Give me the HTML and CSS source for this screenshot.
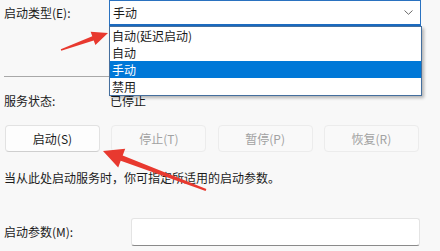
FILE: index.html
```html
<!DOCTYPE html>
<html lang="zh-CN">
<head>
<meta charset="utf-8">
<link rel="stylesheet" href="styles.css">
</head>
<body>
<div class="page">
  <div class="row type-row">
    <span class="label">启动类型(E):</span>
    <div class="combo-wrap">
      <div class="combo">
        <span class="combo-value">手动</span>
        <svg class="chev" width="9" height="5" viewBox="0 0 9 5"><path d="M0.5 0.5 L4.5 4.3 L8.5 0.5" fill="none" stroke="#6a6a6a" stroke-width="1"/></svg>
      </div>
      <ul class="list">
        <li>自动(延迟启动)</li>
        <li>自动</li>
        <li class="sel">手动</li>
        <li>禁用</li>
      </ul>
    </div>
  </div>
  <div class="sep"></div>
  <div class="row status-row">
    <span class="label">服务状态:</span>
    <span class="value">已停止</span>
  </div>
  <div class="buttons">
    <button class="btn">启动(S)</button>
    <button class="btn disabled">停止(T)</button>
    <button class="btn disabled">暂停(P)</button>
    <button class="btn disabled">恢复(R)</button>
  </div>
  <p class="desc">当从此处启动服务时，你可指定所适用的启动参数。</p>
  <div class="row param-row">
    <span class="label">启动参数(M):</span>
    <div class="input"></div>
  </div>
</div>
<svg class="arrows" width="440" height="251" viewBox="0 0 440 251">
  <polygon fill="#e8392f" points="60.8,49.3 92.3,36.3 90.6,31.8 108,33 95.4,45 93.7,40.5 61.2,50.7"/>
  <polygon fill="#e8392f" points="103,151 125.2,148.7 122.7,155.5 206.4,189.1 205.6,190.9 120.7,160.7 118.2,167.5"/>
</svg>
</body>
</html>
```
FILE: styles.css
```css
html, body {
  margin: 0;
  padding: 0;
}
body {
  background: #f8f8f8;
  font-family: "Noto Sans CJK SC", "Noto Sans", sans-serif;
  font-size: 12px;
  color: #1b1b1b;
  width: 440px;
  height: 251px;
  overflow: hidden;
  position: relative;
}
.page {
  padding: 0 0 0 4px;
}
.row {
  display: flex;
  align-items: center;
}
.label {
  line-height: 16px;
}
.type-row {
  height: 26px;
}
.type-row .label {
  width: 105px;
}
.combo-wrap {
  position: relative;
}
.combo {
  box-sizing: border-box;
  width: 312px;
  height: 26px;
  background: #fff;
  border: 1px solid #2a72c0;
  border-bottom: 2px solid #1c6bc0;
  display: flex;
  align-items: center;
  justify-content: space-between;
  padding: 0 7px 0 3px;
}
.combo-value {
  line-height: 16px;
}
.chev {
  display: block;
}
.list {
  position: absolute;
  top: 26px;
  left: 0;
  box-sizing: border-box;
  width: 313px;
  margin: 0;
  padding: 0;
  list-style: none;
  background: #fff;
  border: 1px solid #456f9e;
  box-shadow: 2px 2px 3px rgba(0, 0, 0, 0.28);
  z-index: 2;
}
.list li {
  height: 17px;
  line-height: 17px;
  padding-left: 2px;
}
.list li.sel {
  background: #0078d7;
  color: #fff;
}
.sep {
  margin-top: 50px;
  width: 417px;
  height: 1px;
  background: #a8a8a8;
}
.status-row {
  margin-top: 13px;
  height: 22px;
}
.status-row .label {
  width: 106px;
}
.value {
  line-height: 16px;
}
.buttons {
  margin-top: 13px;
  margin-left: 1px;
  display: grid;
  grid-template-columns: repeat(4, 95px);
  column-gap: 11.3px;
}
.btn {
  box-sizing: border-box;
  height: 27px;
  margin: 0;
  padding: 0;
  font-family: inherit;
  font-size: 12px;
  color: #1b1b1b;
  background: #fdfdfd;
  border: 1px solid #e2e2e2;
  border-bottom-color: #cfcfcf;
  border-radius: 4px;
}
.btn.disabled {
  color: #a2a2a2;
  background: #f9f9f9;
  border-color: #ececec;
}
.desc {
  margin: 18px 0 0;
  line-height: 16px;
}
.param-row {
  margin-top: 32px;
  height: 28px;
}
.param-row .label {
  width: 127px;
}
.input {
  box-sizing: border-box;
  width: 289px;
  height: 28px;
  background: #fff;
  border: 1px solid #e4e4e4;
  border-bottom: 1px solid #8a8a8a;
  border-radius: 3px;
}
.arrows {
  position: absolute;
  top: 0;
  left: 0;
  pointer-events: none;
  z-index: 5;
}
```
